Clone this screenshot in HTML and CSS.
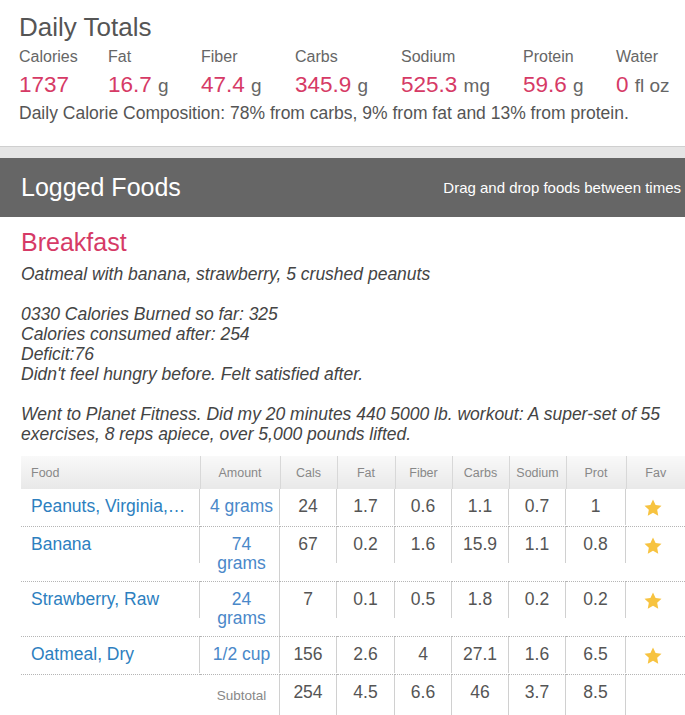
FILE: index.html
```html
<!DOCTYPE html>
<html>
<head>
<meta charset="utf-8">
<link rel="stylesheet" href="styles.css">
</head>
<body>
<section class="totals">
  <h1 class="totals-title">Daily Totals</h1>
  <div class="totals-grid">
    <div class="stat"><div class="stat-label">Calories</div><div class="stat-value">1737</div></div>
    <div class="stat"><div class="stat-label">Fat</div><div class="stat-value">16.7 <span class="unit">g</span></div></div>
    <div class="stat"><div class="stat-label">Fiber</div><div class="stat-value">47.4 <span class="unit">g</span></div></div>
    <div class="stat"><div class="stat-label">Carbs</div><div class="stat-value">345.9 <span class="unit">g</span></div></div>
    <div class="stat"><div class="stat-label">Sodium</div><div class="stat-value">525.3 <span class="unit">mg</span></div></div>
    <div class="stat"><div class="stat-label">Protein</div><div class="stat-value">59.6 <span class="unit">g</span></div></div>
    <div class="stat"><div class="stat-label">Water</div><div class="stat-value">0 <span class="unit">fl oz</span></div></div>
  </div>
  <p class="composition">Daily Calorie Composition: 78% from carbs, 9% from fat and 13% from protein.</p>
</section>

<div class="divider"></div>

<header class="logged-bar">
  <h2 class="logged-title">Logged Foods</h2>
  <span class="logged-hint">Drag and drop foods between times</span>
</header>

<section class="meal">
  <h3 class="meal-title">Breakfast</h3>
  <div class="notes">Oatmeal with banana, strawberry, 5 crushed peanuts<br><br>0330 Calories Burned so far: 325<br>Calories consumed after: 254<br>Deficit:76<br>Didn't feel hungry before. Felt satisfied after.<br><br>Went to Planet Fitness. Did my 20 minutes 440 5000 lb. workout: A super-set of 55 exercises, 8 reps apiece, over 5,000 pounds lifted.</div>

  <table class="foods">
    <colgroup>
      <col class="c-food"><col class="c-amt"><col class="c-num"><col class="c-num2"><col class="c-num"><col class="c-num"><col class="c-num"><col class="c-prot"><col>
    </colgroup>
    <thead>
      <tr>
        <th class="h-food">Food</th><th>Amount</th><th>Cals</th><th>Fat</th><th>Fiber</th><th>Carbs</th><th>Sodium</th><th>Prot</th><th class="h-last">Fav</th>
      </tr>
    </thead>
    <tbody>
      <tr>
        <td><div class="cell food">Peanuts, Virginia, Raw</div></td>
        <td><div class="cell amt">4 grams</div></td>
        <td><div class="cell">24</div></td>
        <td><div class="cell">1.7</div></td>
        <td><div class="cell">0.6</div></td>
        <td><div class="cell">1.1</div></td>
        <td><div class="cell">0.7</div></td>
        <td><div class="cell">1</div></td>
        <td><div class="cell last"><svg class="star" viewBox="0 0 24 24"><path d="M12 1.8l3.1 6.6 7.1.9-5.2 4.9 1.3 7.1L12 17.8l-6.3 3.5 1.3-7.1-5.2-4.9 7.1-.9z"/></svg></div></td>
      </tr>
      <tr>
        <td><div class="cell food">Banana</div></td>
        <td><div class="cell amt full">74<br>grams</div></td>
        <td><div class="cell">67</div></td>
        <td><div class="cell">0.2</div></td>
        <td><div class="cell">1.6</div></td>
        <td><div class="cell">15.9</div></td>
        <td><div class="cell">1.1</div></td>
        <td><div class="cell">0.8</div></td>
        <td><div class="cell last"><svg class="star" viewBox="0 0 24 24"><path d="M12 1.8l3.1 6.6 7.1.9-5.2 4.9 1.3 7.1L12 17.8l-6.3 3.5 1.3-7.1-5.2-4.9 7.1-.9z"/></svg></div></td>
      </tr>
      <tr>
        <td><div class="cell food">Strawberry, Raw</div></td>
        <td><div class="cell amt full">24<br>grams</div></td>
        <td><div class="cell">7</div></td>
        <td><div class="cell">0.1</div></td>
        <td><div class="cell">0.5</div></td>
        <td><div class="cell">1.8</div></td>
        <td><div class="cell">0.2</div></td>
        <td><div class="cell">0.2</div></td>
        <td><div class="cell last"><svg class="star" viewBox="0 0 24 24"><path d="M12 1.8l3.1 6.6 7.1.9-5.2 4.9 1.3 7.1L12 17.8l-6.3 3.5 1.3-7.1-5.2-4.9 7.1-.9z"/></svg></div></td>
      </tr>
      <tr>
        <td><div class="cell food">Oatmeal, Dry</div></td>
        <td><div class="cell amt">1/2 cup</div></td>
        <td><div class="cell">156</div></td>
        <td><div class="cell">2.6</div></td>
        <td><div class="cell">4</div></td>
        <td><div class="cell">27.1</div></td>
        <td><div class="cell">1.6</div></td>
        <td><div class="cell">6.5</div></td>
        <td><div class="cell last"><svg class="star" viewBox="0 0 24 24"><path d="M12 1.8l3.1 6.6 7.1.9-5.2 4.9 1.3 7.1L12 17.8l-6.3 3.5 1.3-7.1-5.2-4.9 7.1-.9z"/></svg></div></td>
      </tr>
      <tr class="subtotal">
        <td><div class="cell last"></div></td>
        <td><div class="cell sub-label">Subtotal</div></td>
        <td><div class="cell">254</div></td>
        <td><div class="cell">4.5</div></td>
        <td><div class="cell">6.6</div></td>
        <td><div class="cell">46</div></td>
        <td><div class="cell">3.7</div></td>
        <td><div class="cell">8.5</div></td>
        <td><div class="cell last"></div></td>
      </tr>
    </tbody>
  </table>
</section>
</body>
</html>
```

FILE: styles.css
```css
* { box-sizing: border-box; }
html, body { margin: 0; padding: 0; background: #fff; }
body {
  font-family: "Liberation Sans", Arial, sans-serif;
  color: #555;
  width: 685px;
  overflow: hidden;
}

.totals { padding: 12px 0 0 19px; }
.totals-title {
  margin: 0;
  font-size: 26px;
  font-weight: normal;
  line-height: 30px;
  color: #555;
}
.totals-grid {
  display: grid;
  grid-template-columns: 89px 93px 94px 106px 122px 93px auto;
  margin-top: 5px;
}
.stat-label { font-size: 16px; line-height: 20px; color: #666; }
.stat-value { font-size: 22.5px; line-height: 28px; color: #d63a66; margin-top: 4px; }
.unit { font-size: 19px; color: #666; }
.composition { margin: 3px 0 0; font-size: 17.5px; line-height: 20px; color: #555; }

.divider {
  margin-top: 23px;
  height: 12px;
  border-top: 1px solid #cfcfcf;
  background: #e5e5e5;
}

.logged-bar {
  height: 59px;
  background: #666;
  display: flex;
  align-items: center;
  justify-content: space-between;
  padding: 0 4px 0 21px;
}
.logged-title {
  margin: 0;
  font-size: 25px;
  font-weight: normal;
  color: #fff;
}
.logged-hint { font-size: 15px; color: #fff; }

.meal { padding: 11px 0 0 21px; }
.meal-title {
  margin: 0;
  font-size: 25px;
  font-weight: normal;
  line-height: 28px;
  color: #d63a66;
}
.notes {
  margin-top: 8px;
  font-size: 17.5px;
  line-height: 20px;
  font-style: italic;
  color: #444;
  padding-right: 8px;
}

.foods {
  margin-top: 12px;
  width: 664px;
  border-collapse: collapse;
  table-layout: fixed;
}
.c-food { width: 179px; }
.c-amt { width: 80px; }
.c-num { width: 57px; }
.c-num2 { width: 58px; }
.c-prot { width: 60px; }

.foods th {
  height: 33px;
  padding: 0;
  font-size: 12.5px;
  font-weight: normal;
  color: #888;
  text-align: center;
  background: linear-gradient(#f9f9f9, #e8e8e8);
  border-right: 1px solid #d8d8d8;
}
.foods th.h-food { text-align: left; padding-left: 10px; }
.foods th.h-last { border-right: none; }

.foods td {
  padding: 0;
  vertical-align: top;
  border-bottom: 1px dotted #b5b5b5;
}
.foods tr.subtotal td { border-bottom: none; }

.cell {
  padding: 8px 2px 9px;
  font-size: 17.5px;
  line-height: 19px;
  text-align: center;
  color: #555;
  border-right: 1px solid #d0d0d0;
  min-height: 36px;
}
.cell.last { border-right: none; }
.cell.food {
  text-align: left;
  padding-left: 10px;
  padding-right: 12px;
  color: #2d7fbf;
  white-space: nowrap;
  overflow: hidden;
  text-overflow: ellipsis;
}
.cell.amt { color: #4a88c9; padding-left: 4px; padding-right: 0; }
.cell.full { height: 54px; padding-bottom: 7px; }
.subtotal .cell { height: 40px; }
.cell.sub-label { font-size: 13.5px; color: #888; padding-top: 11px; padding-left: 6px; }

.star { width: 20px; height: 20px; fill: #f7c340; display: block; margin: 0 auto; position: relative; top: 1px; left: -3px; }
```
